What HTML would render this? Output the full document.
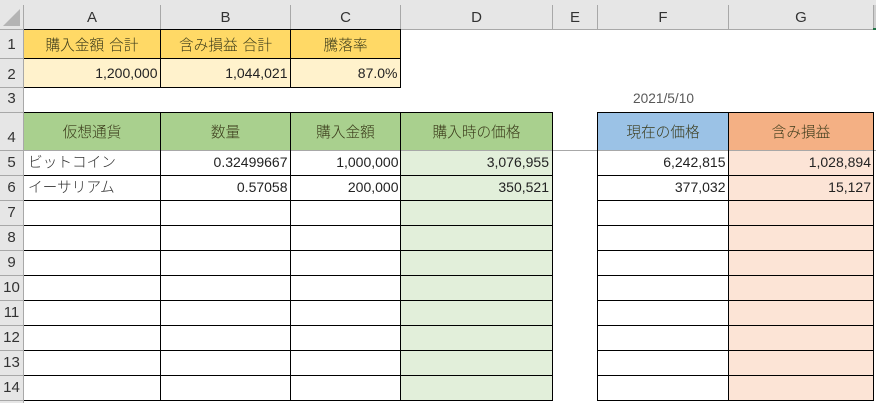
<!DOCTYPE html>
<html lang="ja"><head><meta charset="utf-8"><style>
html,body{margin:0;padding:0;background:#fff}
#s{position:relative;width:876px;height:403px;overflow:hidden;background:#fff;font:14px/20px "Liberation Sans","Noto Sans CJK JP",sans-serif;color:#222}
#s div{position:absolute}
.h{top:8px;height:20px;text-align:center;font-size:15px;color:#333}
.r{left:0;width:23px;text-align:center;font-size:15px;color:#333}
.l{background:#000}
.g{background:#a8a8a8}
.t{text-align:center;font-size:14.67px;color:#3a3a1a;font-weight:300;word-spacing:1px}
.n{text-align:right;color:#222}
.j{font-size:14.67px;color:#333;font-weight:300}
</style></head><body><div id="s">
<div style="left:0;top:0;width:876px;height:29px;background:#e6e6e6"></div>
<div style="left:0;top:29px;width:23px;height:374px;background:#e6e6e6"></div>
<svg style="position:absolute;left:0;top:0" width="24" height="30"><polygon points="3,26 20,9 20,26" fill="#b4b4b4"/></svg>
<div class="g" style="left:0;top:29px;width:873px;height:1px"></div>
<div class="g" style="left:23px;top:5px;width:1px;height:398px"></div>
<div class="g" style="left:160px;top:5px;width:1px;height:24px"></div>
<div class="g" style="left:290px;top:5px;width:1px;height:24px"></div>
<div class="g" style="left:400px;top:5px;width:1px;height:24px"></div>
<div class="g" style="left:552px;top:5px;width:1px;height:24px"></div>
<div class="g" style="left:597px;top:5px;width:1px;height:24px"></div>
<div class="g" style="left:728px;top:5px;width:1px;height:24px"></div>
<div class="g" style="left:873px;top:5px;width:1px;height:24px"></div>
<div style="left:874px;top:5px;width:2px;height:24px;background:#d0d0d0"></div>
<div style="left:873px;top:28px;width:3px;height:2px;background:#217346"></div>
<div class="g" style="left:0;top:58px;width:23px;height:1px"></div>
<div class="g" style="left:0;top:87px;width:23px;height:1px"></div>
<div class="g" style="left:0;top:112px;width:23px;height:1px"></div>
<div class="g" style="left:0;top:150px;width:876px;height:1px"></div>
<div class="g" style="left:0;top:175px;width:23px;height:1px"></div>
<div class="g" style="left:0;top:200px;width:23px;height:1px"></div>
<div class="g" style="left:0;top:225px;width:23px;height:1px"></div>
<div class="g" style="left:0;top:250px;width:23px;height:1px"></div>
<div class="g" style="left:0;top:275px;width:23px;height:1px"></div>
<div class="g" style="left:0;top:300px;width:23px;height:1px"></div>
<div class="g" style="left:0;top:325px;width:23px;height:1px"></div>
<div class="g" style="left:0;top:350px;width:23px;height:1px"></div>
<div class="g" style="left:0;top:375px;width:23px;height:1px"></div>
<div class="g" style="left:0;top:400px;width:23px;height:1px"></div>

<div class="h" style="left:24px;width:136px">A</div>
<div class="h" style="left:161px;width:129px">B</div>
<div class="h" style="left:291px;width:109px">C</div>
<div class="h" style="left:401px;width:151px">D</div>
<div class="h" style="left:553px;width:44px">E</div>
<div class="h" style="left:598px;width:130px">F</div>
<div class="h" style="left:729px;width:144px">G</div>

<div class="r" style="top:35px">1</div>
<div class="r" style="top:65px">2</div>
<div class="r" style="top:89px">3</div>
<div class="r" style="top:128px">4</div>
<div class="r" style="top:153px">5</div>
<div class="r" style="top:178px">6</div>
<div class="r" style="top:203px">7</div>
<div class="r" style="top:228px">8</div>
<div class="r" style="top:253px">9</div>
<div class="r" style="top:278px">10</div>
<div class="r" style="top:303px">11</div>
<div class="r" style="top:328px">12</div>
<div class="r" style="top:353px">13</div>
<div class="r" style="top:378px">14</div>

<div style="left:24px;top:30px;width:376px;height:28px;background:#ffd966"></div>
<div style="left:24px;top:59px;width:376px;height:28px;background:#fff2cc"></div>
<div style="left:24px;top:113px;width:528px;height:37px;background:#a9d08e"></div>
<div style="left:598px;top:113px;width:130px;height:37px;background:#9bc2e6"></div>
<div style="left:729px;top:113px;width:144px;height:37px;background:#f4b084"></div>
<div style="left:401px;top:151px;width:151px;height:250px;background:#e2efda"></div>
<div style="left:729px;top:151px;width:144px;height:250px;background:#fce4d6"></div>

<div class="l" style="left:24px;top:29px;width:377px;height:1px"></div>
<div class="l" style="left:24px;top:58px;width:377px;height:1px"></div>
<div class="l" style="left:24px;top:87px;width:377px;height:1px"></div>
<div class="l" style="left:160px;top:29px;width:1px;height:58px"></div>
<div class="l" style="left:290px;top:29px;width:1px;height:58px"></div>
<div class="l" style="left:400px;top:29px;width:1px;height:58px"></div>

<div class="l" style="left:24px;top:112px;width:529px;height:1px"></div>
<div class="l" style="left:24px;top:175px;width:529px;height:1px"></div>
<div class="l" style="left:24px;top:200px;width:529px;height:1px"></div>
<div class="l" style="left:24px;top:225px;width:529px;height:1px"></div>
<div class="l" style="left:24px;top:250px;width:529px;height:1px"></div>
<div class="l" style="left:24px;top:275px;width:529px;height:1px"></div>
<div class="l" style="left:24px;top:300px;width:529px;height:1px"></div>
<div class="l" style="left:24px;top:325px;width:529px;height:1px"></div>
<div class="l" style="left:24px;top:350px;width:529px;height:1px"></div>
<div class="l" style="left:24px;top:375px;width:529px;height:1px"></div>
<div class="l" style="left:24px;top:400px;width:529px;height:1px"></div>
<div class="l" style="left:160px;top:112px;width:1px;height:289px"></div>
<div class="l" style="left:290px;top:112px;width:1px;height:289px"></div>
<div class="l" style="left:400px;top:112px;width:1px;height:289px"></div>
<div class="l" style="left:552px;top:112px;width:1px;height:289px"></div>

<div class="l" style="left:597px;top:112px;width:277px;height:1px"></div>
<div class="l" style="left:597px;top:175px;width:277px;height:1px"></div>
<div class="l" style="left:597px;top:200px;width:277px;height:1px"></div>
<div class="l" style="left:597px;top:225px;width:277px;height:1px"></div>
<div class="l" style="left:597px;top:250px;width:277px;height:1px"></div>
<div class="l" style="left:597px;top:275px;width:277px;height:1px"></div>
<div class="l" style="left:597px;top:300px;width:277px;height:1px"></div>
<div class="l" style="left:597px;top:325px;width:277px;height:1px"></div>
<div class="l" style="left:597px;top:350px;width:277px;height:1px"></div>
<div class="l" style="left:597px;top:375px;width:277px;height:1px"></div>
<div class="l" style="left:597px;top:400px;width:277px;height:1px"></div>
<div class="l" style="left:597px;top:112px;width:1px;height:289px"></div>
<div class="l" style="left:728px;top:112px;width:1px;height:289px"></div>
<div class="l" style="left:873px;top:112px;width:1px;height:289px"></div>

<div class="t" style="left:24px;top:36px;width:136px">購入金額 合計</div>
<div class="t" style="left:161px;top:36px;width:129px">含み損益 合計</div>
<div class="t" style="left:291px;top:36px;width:109px">騰落率</div>
<div class="n" style="left:24px;top:63px;width:133.5px">1,200,000</div>
<div class="n" style="left:161px;top:63px;width:126.5px">1,044,021</div>
<div class="n" style="left:291px;top:63px;width:106.5px">87.0%</div>

<div style="left:598px;top:89px;width:131px;text-align:center;font-size:13.7px;color:#595959">2021/5/10</div>

<div class="t" style="left:24px;top:123px;width:136px">仮想通貨</div>
<div class="t" style="left:161px;top:123px;width:129px">数量</div>
<div class="t" style="left:291px;top:123px;width:109px">購入金額</div>
<div class="t" style="left:401px;top:123px;width:151px">購入時の価格</div>
<div class="t" style="left:598px;top:123px;width:130px">現在の価格</div>
<div class="t" style="left:729px;top:123px;width:144px">含み損益</div>

<div class="j" style="left:28px;top:153px">ビットコイン</div>
<div class="j" style="left:28px;top:178px">イーサリアム</div>
<div class="n" style="left:161px;top:152px;width:126.5px">0.32499667</div>
<div class="n" style="left:161px;top:177px;width:126.5px">0.57058</div>
<div class="n" style="left:291px;top:152px;width:107.5px">1,000,000</div>
<div class="n" style="left:291px;top:177px;width:107.5px">200,000</div>
<div class="n" style="left:401px;top:152px;width:148px">3,076,955</div>
<div class="n" style="left:401px;top:177px;width:148px">350,521</div>
<div class="n" style="left:598px;top:152px;width:127.5px">6,242,815</div>
<div class="n" style="left:598px;top:177px;width:127.5px">377,032</div>
<div class="n" style="left:729px;top:152px;width:142px">1,028,894</div>
<div class="n" style="left:729px;top:177px;width:142px">15,127</div>
</div></body></html>
